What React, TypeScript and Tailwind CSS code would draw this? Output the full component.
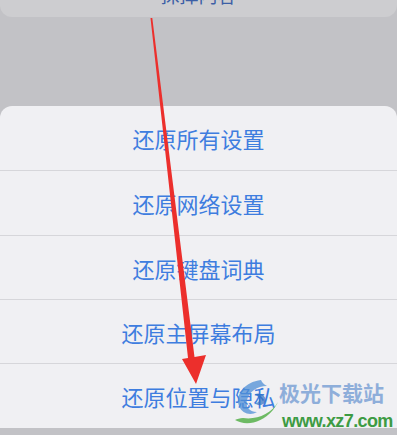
import React from "react";

const rows = [
  { label: "还原所有设置", h: "h-[65px]" },
  { label: "还原网络设置", h: "h-[65px]" },
  { label: "还原键盘词典", h: "h-[64px]" },
  { label: "还原主屏幕布局", h: "h-[64px]" },
  { label: "还原位置与隐私", h: "h-[64px]" },
];

export default function App() {
  return (
    <div
      className="relative w-[397px] h-[435px] overflow-hidden bg-[#c2c2c6] flex flex-col"
      style={{ fontFamily: '"Noto Sans CJK SC", "Noto Sans", sans-serif' }}
    >
      {/* top card, mostly scrolled out of view */}
      <div className="shrink-0 h-[17px] bg-[#cdcdd0] rounded-b-[12px] flex items-end justify-center overflow-hidden">
        <span className="text-[19px] leading-[19px] mb-[13px] text-[#3c5fa6]">
          抹掉内容
        </span>
      </div>

      {/* action sheet */}
      <div className="shrink-0 mt-[89px] bg-[#f0f0f3] rounded-t-[12px] flex flex-col">
        {rows.map((r, i) => (
          <div
            key={r.label}
            className={`shrink-0 ${r.h} flex items-center justify-center ${
              i < rows.length - 1 ? "border-b border-[#d6d6da]" : ""
            }`}
          >
            <span className="text-[22px] leading-none text-[#3e7ddf]">{r.label}</span>
          </div>
        ))}
      </div>

      {/* underlying page text peeking below */}
      <div className="shrink-0 pl-[17px] pt-[1px]">
        <span className="text-[13px] leading-[13px] text-[#4866a6]">通讯录</span>
      </div>

      {/* watermark */}
      <div className="absolute left-[231px] top-[376px] w-[50px] h-[54px] pointer-events-none">
        <svg viewBox="0 0 50 54" className="w-full h-full">
          <path
            d="M30 4 C14 6 4 18 8 30 C11 38 20 40 26 36 C18 36 14 30 16 24 C18 16 26 10 36 10 C32 8 31 6 30 4 Z"
            fill="#4f8fd6"
            opacity="0.75"
          />
          <path
            d="M24 18 C30 16 36 20 34 26 C32 30 26 30 24 27 C27 27 29 25 28 22 C27 20 25 19 24 18 Z"
            fill="#2f6fc0"
            opacity="0.7"
          />
          <path
            d="M4 44 C14 50 30 48 42 34 C44 31 46 28 47 26 C40 38 26 44 12 42 C9 42 6 43 4 44 Z"
            fill="#56b04a"
            opacity="0.85"
          />
        </svg>
      </div>
      <div className="absolute left-[279px] top-[379px] text-[21px] leading-[26px] font-bold text-[#7ea3d6] opacity-85 pointer-events-none">
        极光下载站
      </div>
      <div
        className="absolute left-[282px] top-[411px] text-[18px] leading-[20px] font-bold text-[#3d9b43] tracking-[-0.6px] pointer-events-none"
        style={{ fontFamily: '"Liberation Sans", Arial, sans-serif' }}
      >
        www.xz7.com
      </div>

      {/* red arrow annotation */}
      <svg
        className="absolute left-0 top-0 pointer-events-none"
        width="397"
        height="435"
        viewBox="0 0 397 435"
      >
        <polygon
          points="150.5,18 152.3,18 194.5,357 206,355 196,384 182,359 188,358"
          fill="#ec2f2c"
        />
      </svg>
    </div>
  );
}
